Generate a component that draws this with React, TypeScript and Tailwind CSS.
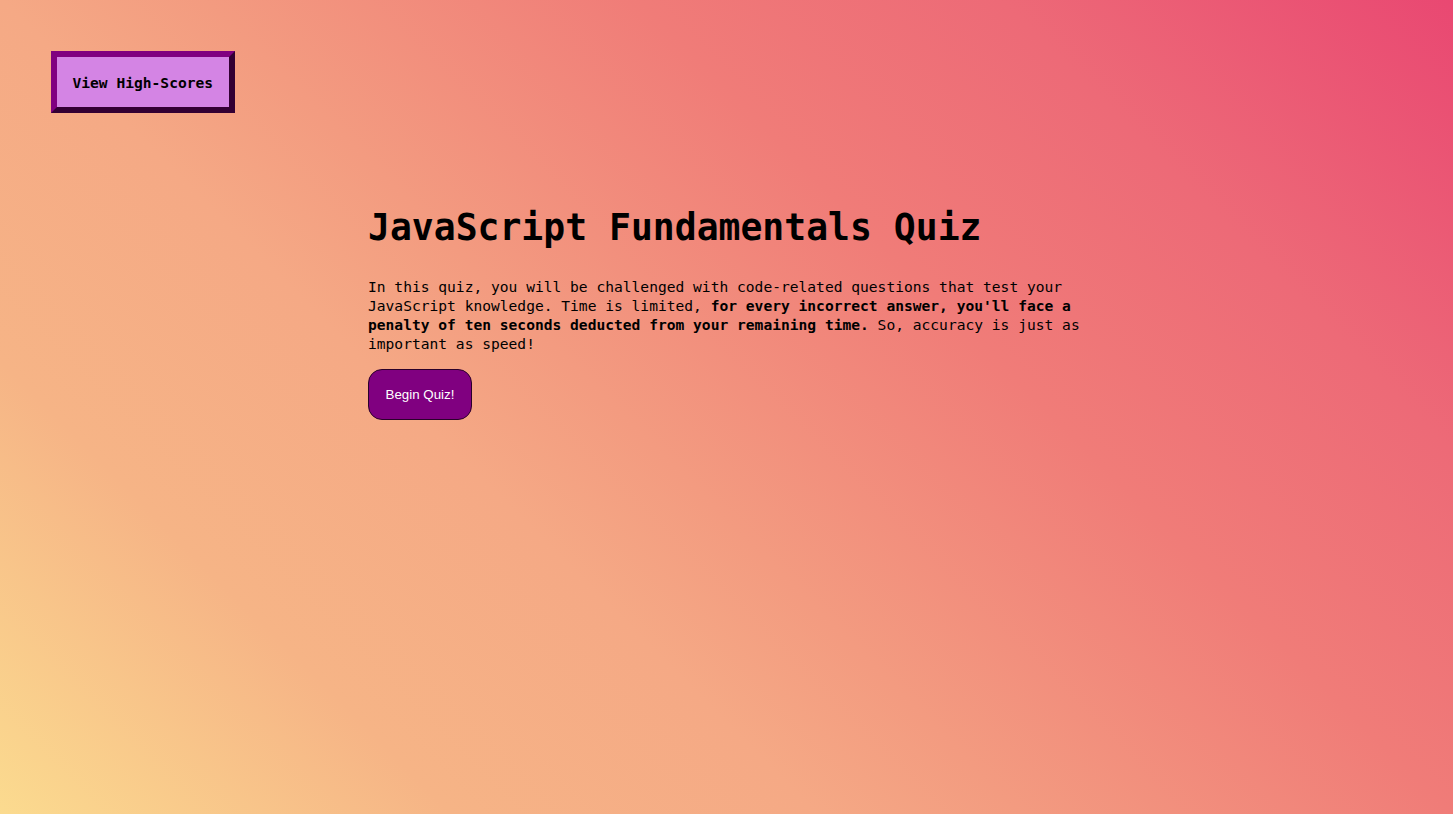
export default function App() {
  return (
    <div className="min-h-[814px] w-full bg-[linear-gradient(45deg,#fbdb8f_0%,#f6b486_20%,#f5a985_36%,#f39b80_45%,#f07c78_64%,#ed6a77_80%,#e94872_100%)] font-['DejaVu_Sans_Mono',monospace] text-black">
      {/* header */}
      <header className="pl-[51px] pt-[51px]">
        <button className="border-[6px] border-t-[#800080] border-l-[#800080] border-b-[#330033] border-r-[#330033] bg-[#d484e4] px-[15.5px] pt-[17px] pb-[15px] text-[14.6px] leading-[18px] font-bold text-black">
          View High-Scores
        </button>
      </header>

      {/* intro */}
      <main className="mx-auto mt-[94px] w-[717px]">
        <h1 className="text-[36.4px] leading-[42px] font-bold">JavaScript Fundamentals Quiz</h1>
        <p className="mt-[28px] text-[14.6px] leading-[19px]">
          In this quiz, you will be challenged with code-related questions that test your JavaScript knowledge.
          Time is limited,{" "}
          <strong className="font-bold">
            for every incorrect answer, you'll face a penalty of ten seconds deducted from your remaining time.
          </strong>{" "}
          So, accuracy is just as important as speed!
        </p>
        <button className="mt-[16px] flex h-[51px] w-[104px] items-center justify-center rounded-[14px] border border-[#2a002a] bg-[#800080] font-['Liberation_Sans',Arial,sans-serif] text-[13.33px] text-white">
          Begin Quiz!
        </button>
      </main>
    </div>
  );
}
